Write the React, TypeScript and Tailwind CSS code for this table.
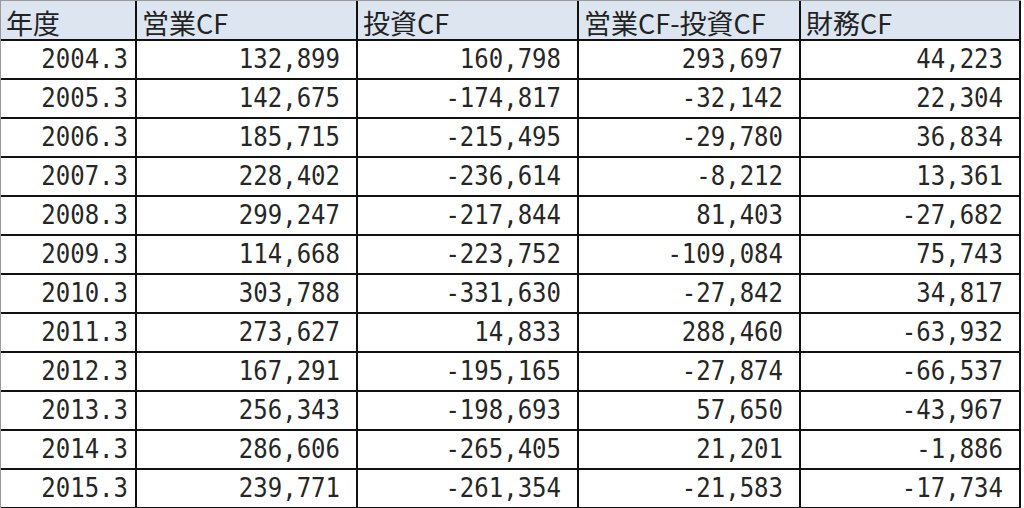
import React from 'react';

const rows: string[][] = [
  ['2004.3', '132,899', '160,798', '293,697', '44,223'],
  ['2005.3', '142,675', '-174,817', '-32,142', '22,304'],
  ['2006.3', '185,715', '-215,495', '-29,780', '36,834'],
  ['2007.3', '228,402', '-236,614', '-8,212', '13,361'],
  ['2008.3', '299,247', '-217,844', '81,403', '-27,682'],
  ['2009.3', '114,668', '-223,752', '-109,084', '75,743'],
  ['2010.3', '303,788', '-331,630', '-27,842', '34,817'],
  ['2011.3', '273,627', '14,833', '288,460', '-63,932'],
  ['2012.3', '167,291', '-195,165', '-27,874', '-66,537'],
  ['2013.3', '256,343', '-198,693', '57,650', '-43,967'],
  ['2014.3', '286,606', '-265,405', '21,201', '-1,886'],
  ['2015.3', '239,771', '-261,354', '-21,583', '-17,734'],
];

const headers = ['年度', '営業CF', '投資CF', '営業CF-投資CF', '財務CF'];

export default function App() {
  return (
    <div className="w-[1024px] h-[508px] bg-white">
      <div className="inline-grid grid-cols-[134px_219px_219px_220px_218px] grid-rows-[38px_repeat(12,37px)] gap-[2px] bg-[#111] border-t border-l border-[#9a9a9a] pr-[2px] pb-[2px]">
        {headers.map((h) => (
          <div
            key={h}
            className="bg-[#dce5f0] flex items-center pl-[5px] pt-[4px] text-[27px] leading-none text-[#222] font-['Noto_Sans_CJK_JP',sans-serif] whitespace-nowrap"
          >
            {h}
          </div>
        ))}
        {rows.map((r) =>
          r.map((v, i) => (
            <div
              key={r[0] + i}
              className={`bg-white flex items-center justify-end text-[24px] leading-none text-[#262626] font-['DejaVu_Sans_Mono',monospace] whitespace-nowrap ${i === 0 ? 'pr-[7px]' : 'pr-[16px]'}`}
            >
              <span className="inline-block scale-y-[1.12] -translate-y-px">{v}</span>
            </div>
          ))
        )}
      </div>
    </div>
  );
}
